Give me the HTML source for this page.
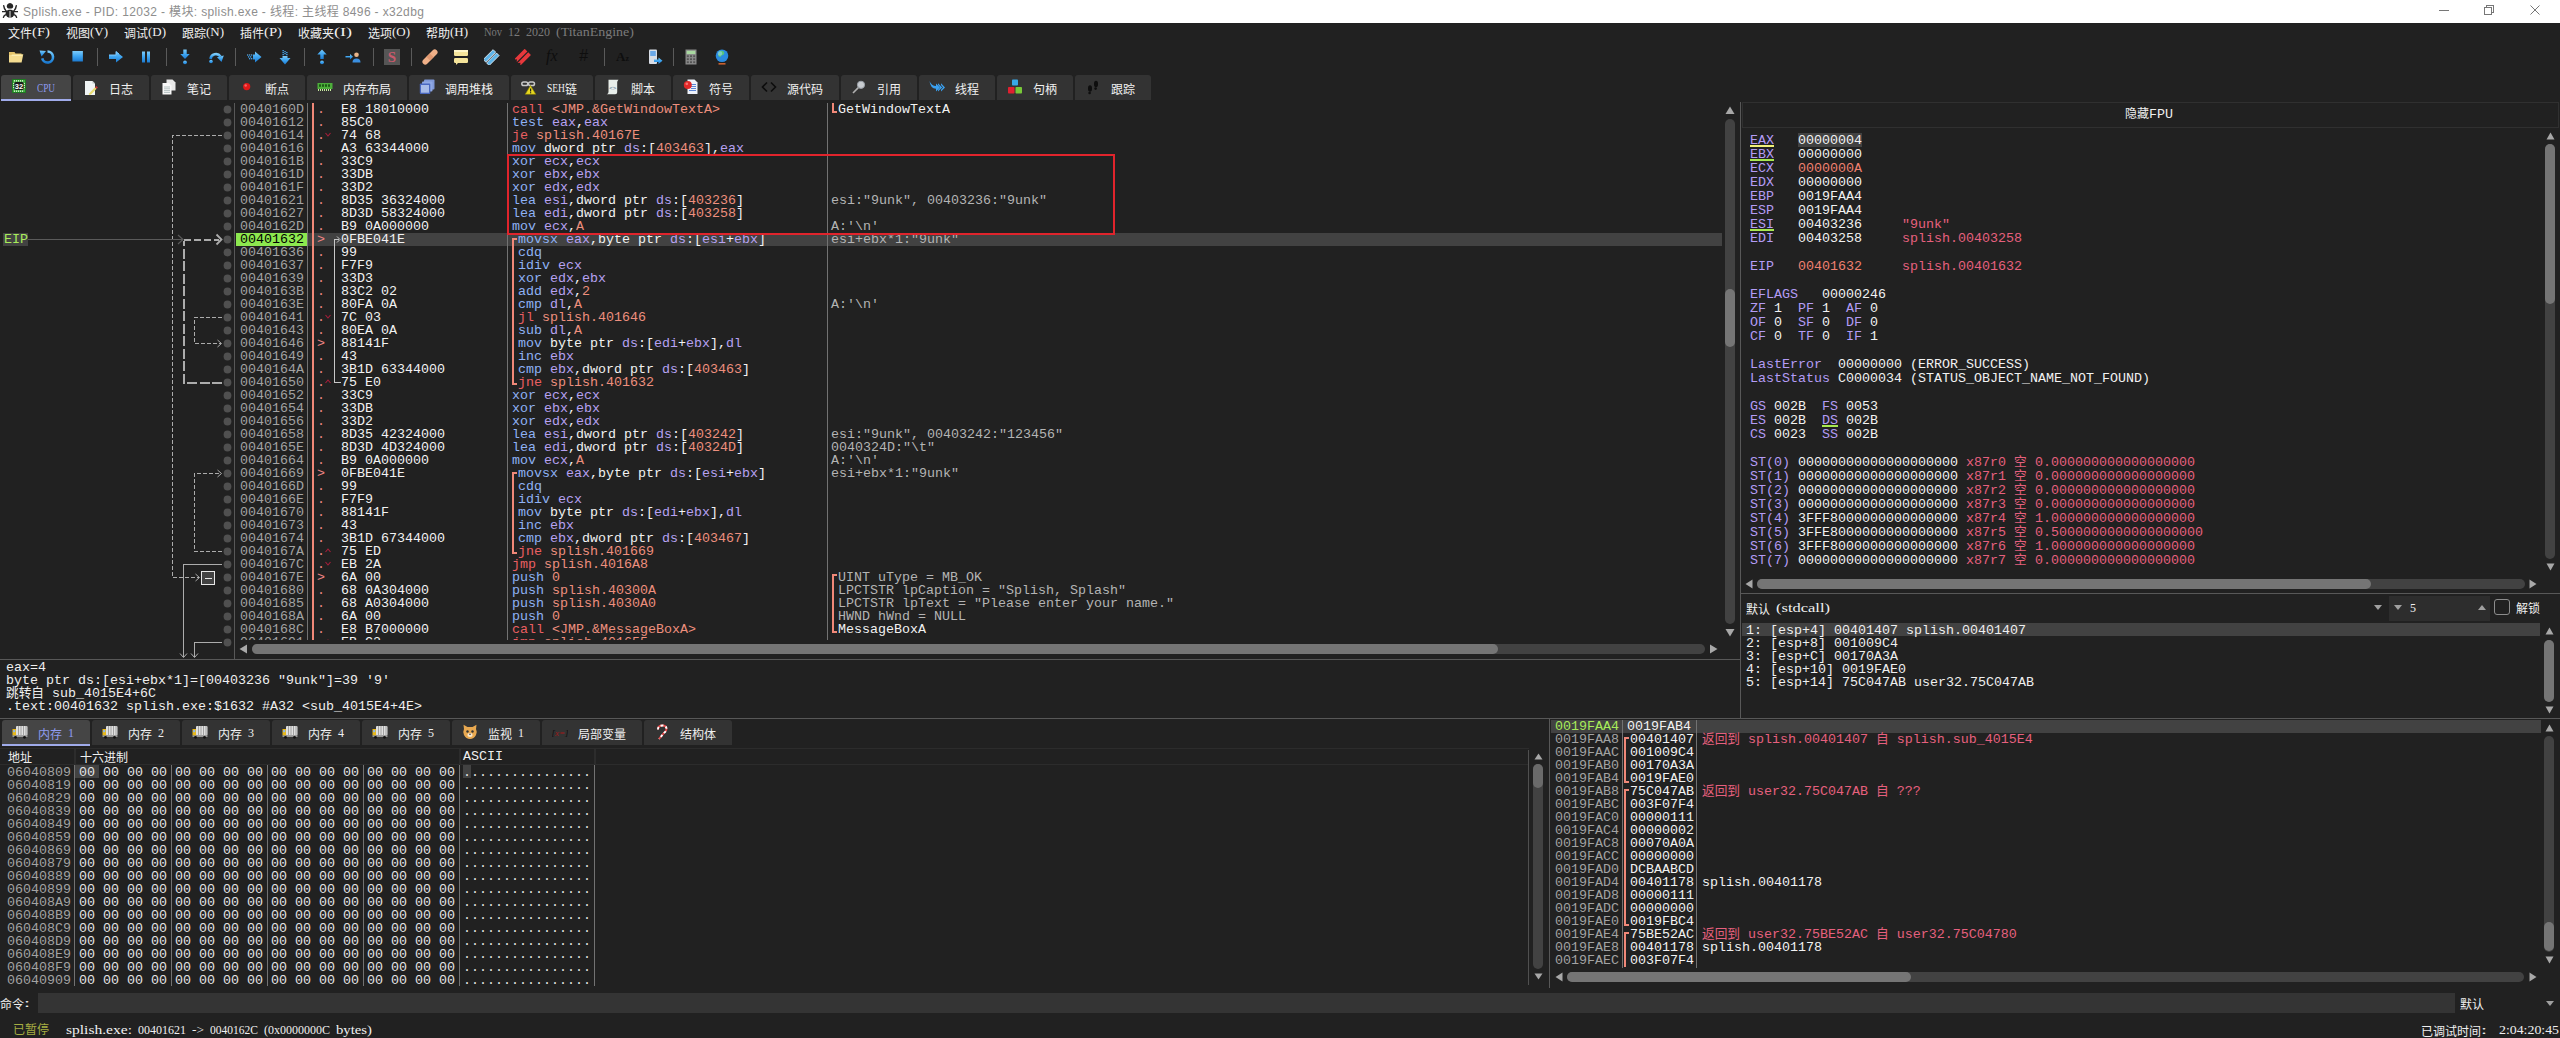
<!DOCTYPE html><html><head><meta charset="utf-8"><title>x32dbg</title><style>
*{box-sizing:border-box;margin:0;padding:0}
html,body{width:2560px;height:1038px;overflow:hidden;background:#212121}
body{position:relative;font-family:"Liberation Mono","Noto Sans CJK SC",monospace;font-size:13.333px;color:#e8e8e8}
div,span,svg{position:absolute}
span{position:static}
.m{white-space:pre;font-family:"Liberation Mono","Noto Sans CJK SC",monospace;font-size:13.333px;line-height:13px;height:13px;color:#efefef}
.m14{line-height:14px;height:14px}
.s{white-space:pre;font-family:"Liberation Serif","Noto Sans CJK SC",serif;font-size:12px;line-height:14px;color:#f0f0f0}
.a{color:#a3a3a3}.w{color:#f2f2f2}.k{color:#8fb2f5}.r{color:#b7a2f2}.n{color:#ee8f7e}.j{color:#ea5f62}.c{color:#b4b4b4}
.p{color:#e6607e}.rn{color:#b49cf5}.ch{color:#f08070}
.vl{width:1px;background:#727272}
.hl{height:1px;background:#4a4a4a}
.tab{background:#333;height:25px;top:75px}
.tab.sel{background:#454545;height:26px;border-bottom:2px solid #a0abea}
.tab .s{top:6px;left:36px}
.tab.sel .s{color:#8f9cf0}
.tab svg{left:10px;top:4px}
.trk{background:#424242;border-radius:5px}
.thm{background:#757575;border-radius:5px}
</style></head><body>
<div style="left:0px;top:0px;width:2560px;height:23px;background:#ffffff;"></div>
<div style="left:23px;top:4px;font-family:'Liberation Sans','Noto Sans CJK SC',sans-serif;font-size:12px;line-height:16px;color:#8e8e8e;white-space:pre;letter-spacing:0.36px">Splish.exe - PID: 12032 - 模块: splish.exe - 线程: 主线程 8496 - x32dbg</div>
<svg style="left:2px;top:3px" width="16" height="15" viewBox="0 0 16 15"><g fill="none" stroke="#262626" stroke-width="1.4" stroke-linecap="round"><path d="M4.2 8 Q2 6 1.7 2.6 M11.8 8 Q14 6 14.3 2.6 M0.5 8.6 H15.5 M4.6 11.4 Q1.8 12.2 1.4 14.3 M11.4 11.4 Q14.2 12.2 14.6 14.3"/></g><ellipse cx="8" cy="10.6" rx="4.4" ry="4" fill="#262626"/><path d="M8 0 q3.4 0.6 3.2 3.6 q-0.2 2.4 -3.2 2.5 q-3 -0.1 -3.2 -2.5 q-0.2 -3 3.2 -3.6z" fill="#262626"/><path d="M4 6.5 Q8 5.4 12 6.5" stroke="#fff" stroke-width="0.8" fill="none"/><rect x="7.3" y="8" width="1.4" height="6.4" fill="#b0b0b0"/></svg>
<svg style="left:2430px;top:0" width="130" height="23" viewBox="0 0 130 23"><g stroke="#777" stroke-width="1" fill="none" shape-rendering="crispEdges"><path d="M9 10.5 H19"/><path d="M54.5 7.5 h7 v7 h-7 z M56.5 7.5 v-2 h7 v7 h-2"/></g><path d="M100.5 5.5 L109.5 14.5 M109.5 5.5 L100.5 14.5" stroke="#777" stroke-width="1" fill="none"/></svg>
<div class="s" style="left:8px;top:25px;"><span style="position:relative;top:1.5px">文件</span><span style="display:inline-block;width:18px;height:14px;vertical-align:top"><span style="display:inline-block;transform:scaleX(1.227);transform-origin:0 50%">(F)</span></span></div>
<div class="s" style="left:66px;top:25px;"><span style="position:relative;top:1.5px">视图</span><span style="display:inline-block;width:18px;height:14px;vertical-align:top"><span style="display:inline-block;transform:scaleX(1.080);transform-origin:0 50%">(V)</span></span></div>
<div class="s" style="left:124px;top:25px;"><span style="position:relative;top:1.5px">调试</span><span style="display:inline-block;width:18px;height:14px;vertical-align:top"><span style="display:inline-block;transform:scaleX(1.080);transform-origin:0 50%">(D)</span></span></div>
<div class="s" style="left:182px;top:25px;"><span style="position:relative;top:1.5px">跟踪</span><span style="display:inline-block;width:18px;height:14px;vertical-align:top"><span style="display:inline-block;transform:scaleX(1.080);transform-origin:0 50%">(N)</span></span></div>
<div class="s" style="left:240px;top:25px;"><span style="position:relative;top:1.5px">插件</span><span style="display:inline-block;width:18px;height:14px;vertical-align:top"><span style="display:inline-block;transform:scaleX(1.227);transform-origin:0 50%">(P)</span></span></div>
<div class="s" style="left:298px;top:25px;"><span style="position:relative;top:1.5px">收藏夹</span><span style="display:inline-block;width:18px;height:14px;vertical-align:top"><span style="display:inline-block;transform:scaleX(1.501);transform-origin:0 50%">(I)</span></span></div>
<div class="s" style="left:368px;top:25px;"><span style="position:relative;top:1.5px">选项</span><span style="display:inline-block;width:18px;height:14px;vertical-align:top"><span style="display:inline-block;transform:scaleX(1.080);transform-origin:0 50%">(O)</span></span></div>
<div class="s" style="left:426px;top:25px;"><span style="position:relative;top:1.5px">帮助</span><span style="display:inline-block;width:18px;height:14px;vertical-align:top"><span style="display:inline-block;transform:scaleX(1.080);transform-origin:0 50%">(H)</span></span></div>
<div class="s" style="left:484px;top:25px;color:#7a7a7a;"><span style="display:inline-block;width:18px;height:14px;vertical-align:top"><span style="display:inline-block;transform:scaleX(0.871);transform-origin:0 50%">Nov</span></span><span style="display:inline-block;width:6px;height:14px;vertical-align:top"></span><span style="display:inline-block;width:12px;height:14px;vertical-align:top"><span style="display:inline-block;transform:scaleX(1.000);transform-origin:0 50%">12</span></span><span style="display:inline-block;width:6px;height:14px;vertical-align:top"></span><span style="display:inline-block;width:24px;height:14px;vertical-align:top"><span style="display:inline-block;transform:scaleX(1.000);transform-origin:0 50%">2020</span></span><span style="display:inline-block;width:6px;height:14px;vertical-align:top"></span><span style="display:inline-block;width:78px;height:14px;vertical-align:top"><span style="display:inline-block;transform:scaleX(1.166);transform-origin:0 50%">(TitanEngine)</span></span></div>
<svg width="0" height="0" style="left:0;top:0"><defs><linearGradient id="bg" x1="0" y1="0" x2="0" y2="1"><stop offset="0" stop-color="#7ccbf9"/><stop offset="0.5" stop-color="#3da4f0"/><stop offset="1" stop-color="#1c7ad0"/></linearGradient></defs></svg>
<div style="left:97px;top:48px;width:1px;height:18px;background:#5a5a5a;"></div>
<div style="left:166px;top:48px;width:1px;height:18px;background:#5a5a5a;"></div>
<div style="left:235px;top:48px;width:1px;height:18px;background:#5a5a5a;"></div>
<div style="left:304px;top:48px;width:1px;height:18px;background:#5a5a5a;"></div>
<div style="left:373px;top:48px;width:1px;height:18px;background:#5a5a5a;"></div>
<div style="left:411px;top:48px;width:1px;height:18px;background:#5a5a5a;"></div>
<div style="left:604px;top:48px;width:1px;height:18px;background:#5a5a5a;"></div>
<div style="left:673px;top:48px;width:1px;height:18px;background:#5a5a5a;"></div>
<svg style="left:8px;top:49px" width="16" height="16" viewBox="0 0 16 16"><path d="M1 3 h5.5 l1 1.5 h6 v3 H1z" fill="#e4c46c"/><path d="M1 13.6 V6 h2.5 l0.8 -0.8 H15.3 L13.6 13.6z" fill="#f4dc90"/><path d="M3.6 6.4 H14" stroke="#fbeeb8" stroke-width="1"/></svg>
<svg style="left:39px;top:49px" width="16" height="16" viewBox="0 0 16 16"><path d="M8.5 2.5 a5.5 5.5 0 1 1 -5.3 6.9" fill="none" stroke="url(#bg)" stroke-width="2.6"/><path d="M0.5 1.5 L7 2 L2.5 7.5z" fill="url(#bg)"/></svg>
<svg style="left:69px;top:49px" width="16" height="16" viewBox="0 0 16 16"><rect x="3.4" y="2" width="10.5" height="10.5" fill="url(#bg)"/></svg>
<svg style="left:108px;top:49px" width="16" height="16" viewBox="0 0 16 16"><path d="M1 6 H8 V2.5 L15 8 L8 13.5 V10 H1z" fill="url(#bg)"/><path d="M1 6 H8 V2.5 L11 5" fill="none" stroke="#7cc8ff" stroke-width="1"/></svg>
<svg style="left:138px;top:49px" width="16" height="16" viewBox="0 0 16 16"><rect x="4" y="2.5" width="3" height="11" fill="url(#bg)"/><rect x="9" y="2.5" width="3" height="11" fill="url(#bg)"/></svg>
<svg style="left:177px;top:49px" width="16" height="16" viewBox="0 0 16 16"><path d="M6.3 0.5 h3.4 v4.5 h3 L8 10 L3.3 5 h3z" fill="url(#bg)"/><circle cx="8" cy="13.3" r="1.9" fill="url(#bg)"/></svg>
<svg style="left:208px;top:49px" width="16" height="16" viewBox="0 0 16 16"><path d="M2.5 10 a5.5 5.5 0 0 1 10 -2.5" fill="none" stroke="url(#bg)" stroke-width="2.6"/><path d="M9 8.2 L15.8 6.5 L13.5 13z" fill="url(#bg)"/><circle cx="3" cy="12.5" r="1.8" fill="url(#bg)"/></svg>
<svg style="left:246px;top:49px" width="16" height="16" viewBox="0 0 16 16"><path d="M7 5.5 H9 V2.5 L15.5 8 L9 13.5 V10.5 H7z" fill="url(#bg)"/><g fill="url(#bg)"><rect x="1" y="5.5" width="1.3" height="1.3"/><rect x="3" y="5.5" width="1.3" height="1.3"/><rect x="5" y="5.5" width="1.3" height="1.3"/><rect x="2" y="7.4" width="1.3" height="1.3"/><rect x="4" y="7.4" width="1.3" height="1.3"/><rect x="3" y="9.2" width="1.3" height="1.3"/><rect x="5" y="9.2" width="1.3" height="1.3"/></g></svg>
<svg style="left:277px;top:49px" width="16" height="16" viewBox="0 0 16 16"><path d="M5.5 7 V9 H2.5 L8 15.5 L13.5 9 H10.5 V7z" fill="url(#bg)"/><g fill="url(#bg)"><rect x="5.5" y="1" width="1.3" height="1.3"/><rect x="5.5" y="3" width="1.3" height="1.3"/><rect x="5.5" y="5" width="1.3" height="1.3"/><rect x="7.4" y="2" width="1.3" height="1.3"/><rect x="7.4" y="4" width="1.3" height="1.3"/><rect x="9.2" y="3" width="1.3" height="1.3"/><rect x="9.2" y="5" width="1.3" height="1.3"/></g></svg>
<svg style="left:314px;top:49px" width="16" height="16" viewBox="0 0 16 16"><path d="M6.3 10 h3.4 V5.5 h3 L8 0.5 L3.3 5.5 h3z" fill="url(#bg)"/><circle cx="8" cy="13.3" r="1.9" fill="url(#bg)"/></svg>
<svg style="left:345px;top:49px" width="16" height="16" viewBox="0 0 16 16"><path d="M0.5 7 H5 V5 L8 7.8 L5 10.6 V8.6 H0.5z" fill="url(#bg)"/><circle cx="11.5" cy="5.8" r="2.3" fill="#e9b58a"/><path d="M7.5 13.5 q0 -4 4 -4 q4 0 4 4z" fill="#3b8fe0"/></svg>
<div style="left:384px;top:49px;width:16px;height:16px;background:#555;"></div>
<div style="left:384px;top:49px;width:16px;height:16px;font-family:'Liberation Serif',serif;font-weight:bold;font-size:15px;line-height:16px;text-align:center;color:#c85a6c">S</div>
<svg style="left:422px;top:49px" width="16" height="16" viewBox="0 0 16 16"><rect x="-1.5" y="5.2" width="19" height="5.6" rx="2.8" fill="#f0b088" transform="rotate(-45 8 8)"/><rect x="5.5" y="5.5" width="5" height="5" fill="#e09870" transform="rotate(-45 8 8)"/></svg>
<svg style="left:453px;top:49px" width="16" height="16" viewBox="0 0 16 16"><rect x="1" y="1" width="14" height="6" rx="1.2" fill="#f5e49a"/><rect x="1" y="9" width="14" height="5" rx="1.2" fill="#f5e49a"/><path d="M3 14 v2 l2 -2z" fill="#f5e49a"/><rect x="1" y="1" width="14" height="2" fill="#fff6c8"/></svg>
<svg style="left:484px;top:49px" width="16" height="16" viewBox="0 0 16 16"><g transform="rotate(-45 8 8)"><rect x="0" y="3.6" width="14" height="3.6" fill="#5db4e8" stroke="#e8f4ff" stroke-width=".8"/><rect x="0" y="8.4" width="14" height="3.6" fill="#5db4e8" stroke="#e8f4ff" stroke-width=".8"/></g></svg>
<svg style="left:515px;top:49px" width="16" height="16" viewBox="0 0 16 16"><g transform="rotate(-45 8 8)"><path d="M0 3.4 h15 v3.8 h-15 l2 -1.9z" fill="#e8383c"/><path d="M0 8.4 h15 v3.8 h-15 l2 -1.9z" fill="#e8383c"/></g></svg>
<div style="left:546px;top:47px;width:18px;height:18px;font-family:'Liberation Serif',serif;font-style:italic;font-size:16px;line-height:18px;color:#0e0e0e">fx</div>
<div style="left:579px;top:47px;width:16px;height:18px;font-family:'Liberation Sans',sans-serif;font-style:italic;font-size:16px;line-height:18px;color:#0e0e0e">#</div>
<div style="left:616px;top:49px;width:16px;height:16px;font-family:'Liberation Serif',serif;font-weight:bold;font-size:13px;line-height:16px;color:#0e0e0e">A<span style="font-size:8px">z</span></div>
<svg style="left:647px;top:49px" width="16" height="16" viewBox="0 0 16 16"><rect x="2" y="0.5" width="8" height="14.5" rx="1" fill="#d8dde6"/><rect x="3.2" y="2" width="5.6" height="5" fill="#6aa8e8"/><path d="M7 10.5 h4.5 v-2 l4 3.2 l-4 3.2 v-2 h-4.5z" fill="url(#bg)"/></svg>
<svg style="left:683px;top:49px" width="16" height="16" viewBox="0 0 16 16"><rect x="2.5" y="0.5" width="11" height="15" fill="#8a8a8a"/><rect x="3.7" y="1.8" width="8.6" height="3.2" fill="#a8d8a0"/><g fill="#555"><rect x="3.8" y="6.3" width="2" height="1.8"/><rect x="7" y="6.3" width="2" height="1.8"/><rect x="10.2" y="6.3" width="2" height="1.8"/><rect x="3.8" y="9.3" width="2" height="1.8"/><rect x="7" y="9.3" width="2" height="1.8"/><rect x="10.2" y="9.3" width="2" height="1.8"/><rect x="3.8" y="12.3" width="2" height="1.8"/><rect x="7" y="12.3" width="2" height="1.8"/><rect x="10.2" y="12.3" width="2" height="1.8"/></g></svg>
<svg style="left:714px;top:49px" width="16" height="16" viewBox="0 0 16 16"><circle cx="8" cy="6.8" r="6.3" fill="#2a8be0"/><path d="M5 2.5 q3 -1.5 5 0.5 q1 2 -1 3 q-2 0 -2.5 2 q-2 0 -2.5 -2z" fill="#58c878"/><circle cx="6" cy="4.5" r="2.2" fill="#9ad4ff" opacity=".55"/><rect x="4.5" y="14" width="7" height="1.6" fill="#c86030"/></svg>
<div class="tab sel" style="left:1px;top:75px;width:70px;border-radius:3px 3px 0 0"><svg width="16" height="16" viewBox="0 0 16 16"><g transform="translate(0,-1)"><rect x="1" y="1" width="14" height="14" fill="#1f7a22"/><rect x="2" y="2" width="12" height="12" fill="#43ab43"/><g fill="#c8ecc0"><rect x="3" y="2" width="1" height="1.6"/><rect x="5" y="2" width="1" height="1.6"/><rect x="7" y="2" width="1" height="1.6"/><rect x="9" y="2" width="1" height="1.6"/><rect x="11" y="2" width="1" height="1.6"/><rect x="3" y="12.4" width="1" height="1.6"/><rect x="5" y="12.4" width="1" height="1.6"/><rect x="7" y="12.4" width="1" height="1.6"/><rect x="9" y="12.4" width="1" height="1.6"/><rect x="11" y="12.4" width="1" height="1.6"/><rect x="2" y="5" width="1.4" height="1"/><rect x="2" y="7" width="1.4" height="1"/><rect x="2" y="9" width="1.4" height="1"/><rect x="12.6" y="5" width="1.4" height="1"/><rect x="12.6" y="7" width="1.4" height="1"/><rect x="12.6" y="9" width="1.4" height="1"/></g><rect x="3.4" y="4" width="9.2" height="8" rx="1.5" fill="#1a1a1a"/><text x="8" y="10.7" font-family="Liberation Sans" font-weight="bold" font-size="7.5" text-anchor="middle" fill="#fff">32</text></g></svg><div class="s"><span style="display:inline-block;width:18px;height:14px;vertical-align:top"><span style="display:inline-block;transform:scaleX(0.771);transform-origin:0 50%">CPU</span></span></div></div>
<div class="tab" style="left:73px;top:75px;width:76px;border-radius:3px 3px 0 0"><svg width="16" height="16" viewBox="0 0 16 16"><path d="M2 2 h7.5 l2.5 2.5 v11.5 h-10z" fill="#f0f4f4"/><path d="M9.5 2 v2.5 h2.5z" fill="#c0c8c8"/><path d="M6.3 14.2 L12 8.2 L13.6 9.8 L8 15.6 L5.8 16z" fill="#e8dc70"/><path d="M12 8.2 l1.2 -1.3 l1.7 1.6 l-1.2 1.3z" fill="#d03838"/></svg><div class="s"><span style="position:relative;top:1.5px">日志</span></div></div>
<div class="tab" style="left:151px;top:75px;width:76px;border-radius:3px 3px 0 0"><svg width="16" height="16" viewBox="0 0 16 16"><path d="M5.5 0.5 h6 l3 3 v8 h-9z" fill="#e8e8e8"/><path d="M1.5 4 h6.5 l2.5 2.5 v9 h-9z" fill="#f8f8f8"/><g stroke="#9aa" stroke-width=".7"><path d="M3 8 h6 M3 9.8 h6 M3 11.6 h6 M3 13.4 h6"/></g></svg><div class="s"><span style="position:relative;top:1.5px">笔记</span></div></div>
<div class="tab" style="left:229px;top:75px;width:76px;border-radius:3px 3px 0 0"><svg width="16" height="16" viewBox="0 0 16 16"><circle cx="7.7" cy="7.6" r="3.6" fill="#e01818"/><circle cx="6.7" cy="6.5" r="1.2" fill="#ff8080" opacity=".7"/></svg><div class="s"><span style="position:relative;top:1.5px">断点</span></div></div>
<div class="tab" style="left:307px;top:75px;width:100px;border-radius:3px 3px 0 0"><svg width="16" height="16" viewBox="0 0 16 16"><rect x="0.5" y="4" width="15" height="6" fill="#4cae3a"/><g fill="#1c5a14"><rect x="2" y="5.3" width="2" height="2.5"/><rect x="5" y="5.3" width="2" height="2.5"/><rect x="8" y="5.3" width="2" height="2.5"/><rect x="11" y="5.3" width="2" height="2.5"/></g><g fill="#c8e8a0"><rect x="1" y="10" width="1" height="2"/><rect x="3" y="10" width="1" height="2"/><rect x="5" y="10" width="1" height="2"/><rect x="7" y="10" width="1" height="2"/><rect x="9" y="10" width="1" height="2"/><rect x="11" y="10" width="1" height="2"/><rect x="13" y="10" width="1" height="2"/></g></svg><div class="s"><span style="position:relative;top:1.5px">内存布局</span></div></div>
<div class="tab" style="left:409px;top:75px;width:100px;border-radius:3px 3px 0 0"><svg width="16" height="16" viewBox="0 0 16 16"><rect x="5" y="0.5" width="10.5" height="10" rx="1" fill="#7f98d8"/><rect x="3" y="2.5" width="10.5" height="10" rx="1" fill="#8fa8e4"/><rect x="0.8" y="4.5" width="10.5" height="10.5" rx="1" fill="#4a68c0"/><rect x="2" y="6" width="8" height="7.7" fill="#a8bce8"/></svg><div class="s"><span style="position:relative;top:1.5px">调用堆栈</span></div></div>
<div class="tab" style="left:511px;top:75px;width:82px;border-radius:3px 3px 0 0"><svg width="16" height="16" viewBox="0 0 16 16"><g fill="none" stroke="#c8c8c8" stroke-width="1.5"><rect x="0.8" y="3" width="6" height="3.6" rx="1.8"/><rect x="7.5" y="3" width="6" height="3.6" rx="1.8"/></g><path d="M9.5 6.5 L14.8 15.3 H4.2z" fill="#e8d820" stroke="#8a8000" stroke-width=".6"/><rect x="9" y="9.5" width="1.2" height="3" fill="#222"/><rect x="9" y="13.2" width="1.2" height="1.1" fill="#222"/></svg><div class="s"><span style="display:inline-block;width:18px;height:14px;vertical-align:top"><span style="display:inline-block;transform:scaleX(0.794);transform-origin:0 50%">SEH</span></span><span style="position:relative;top:1.5px">链</span></div></div>
<div class="tab" style="left:595px;top:75px;width:76px;border-radius:3px 3px 0 0"><svg width="16" height="16" viewBox="0 0 16 16"><path d="M3.5 0.8 h10 q-1.3 1 -1.3 2.5 v10 q0 2 -2 2 h-8.5 q1.8 -0.5 1.8 -2.3z" fill="#e8eeea"/><text x="7.7" y="10.5" font-family="Liberation Sans" font-size="6" text-anchor="middle" fill="#4a6a8a">&lt;&gt;</text></svg><div class="s"><span style="position:relative;top:1.5px">脚本</span></div></div>
<div class="tab" style="left:673px;top:75px;width:76px;border-radius:3px 3px 0 0"><svg width="16" height="16" viewBox="0 0 16 16"><path d="M4.5 0.5 h7 l3 3 v11.5 h-10z" fill="#eef2fa"/><g stroke="#4a78d0" stroke-width=".9"><path d="M8 5.5 h5 M8 7.5 h5 M8 9.5 h5 M6 11.5 h7"/></g><circle cx="4.8" cy="6" r="4" fill="#e02828"/><circle cx="3.8" cy="4.8" r="1.4" fill="#ff9090" opacity=".7"/></svg><div class="s"><span style="position:relative;top:1.5px">符号</span></div></div>
<div class="tab" style="left:751px;top:75px;width:88px;border-radius:3px 3px 0 0"><svg width="16" height="16" viewBox="0 0 16 16"><path d="M6 3.5 L1.5 8 L6 12.5 M10 3.5 L14.5 8 L10 12.5" fill="none" stroke="#0c0c0c" stroke-width="1.6"/></svg><div class="s"><span style="position:relative;top:1.5px">源代码</span></div></div>
<div class="tab" style="left:841px;top:75px;width:76px;border-radius:3px 3px 0 0"><svg width="16" height="16" viewBox="0 0 16 16"><circle cx="10" cy="5.8" r="3.6" fill="#c8ccd0" stroke="#9aa0a8" stroke-width="1"/><path d="M7.3 8.6 L2 14" stroke="#b0b0b0" stroke-width="1.6"/></svg><div class="s"><span style="position:relative;top:1.5px">引用</span></div></div>
<div class="tab" style="left:919px;top:75px;width:76px;border-radius:3px 3px 0 0"><svg width="16" height="16" viewBox="0 0 16 16"><path d="M0.5 2 q2 5 6.5 5 v-2.6 l4 4 l-4 4 v-2.6 q-5.5 0 -6.5 -7.8z" fill="#3aa0f0"/><path d="M9 4.2 l4.2 4.2 l-4.2 4.2 l0 -1.8 l2.2 -2.4 l-2.2 -2.4z" fill="#3aa0f0"/><path d="M12 4.2 l4 4.2 l-4 4.2 l0 -1.8 l2 -2.4 l-2 -2.4z" fill="#3aa0f0"/></svg><div class="s"><span style="position:relative;top:1.5px">线程</span></div></div>
<div class="tab" style="left:997px;top:75px;width:76px;border-radius:3px 3px 0 0"><svg width="16" height="16" viewBox="0 0 16 16"><rect x="5" y="0.5" width="6" height="6" rx=".8" fill="#38a8e8"/><rect x="1" y="8" width="6.5" height="6.5" rx=".8" fill="#e02030"/><rect x="8.5" y="8" width="6.5" height="6.5" rx=".8" fill="#78c838"/></svg><div class="s"><span style="position:relative;top:1.5px">句柄</span></div></div>
<div class="tab" style="left:1075px;top:75px;width:76px;border-radius:3px 3px 0 0"><svg width="16" height="16" viewBox="0 0 16 16"><g fill="#0e0e0e"><ellipse cx="5" cy="9.5" rx="2" ry="3.2"/><ellipse cx="11" cy="5" rx="2" ry="3.2"/><circle cx="4.6" cy="14" r="1.3"/><circle cx="10.6" cy="9.6" r="1.3"/></g></svg><div class="s"><span style="position:relative;top:1.5px">跟踪</span></div></div>
<div style="left:235px;top:103px;width:1487px;height:537px;overflow:hidden">
<div style="left:72px;top:130px;width:1415px;height:13px;background:#424242"></div>
<div style="left:1px;top:130px;width:71px;height:13px;background:#8de84f"></div>
<div class="vl" style="left:72px;top:0;height:537px"></div>
<div class="vl" style="left:272px;top:0;height:537px"></div>
<div class="vl" style="left:592px;top:0;height:537px"></div>
<div style="left:77px;top:0;width:2px;height:537px;background:#f08878"></div>
<div style="left:99px;top:137px;width:1px;height:142px;background:#c8c8c8"></div>
<div style="left:99px;top:279px;width:7px;height:1px;background:#c8c8c8"></div>
<div style="left:99px;top:136px;width:5px;height:1px;background:#c8c8c8"></div>
<svg style="left:101px;top:133px" width="5" height="7"><path d="M1 0.5 L4 3.5 L1 6.5" fill="none" stroke="#c8c8c8" stroke-width="1"/></svg>
<div style="left:277px;top:135px;width:2px;height:147px;background:#f08878"></div>
<div style="left:277px;top:135px;width:5px;height:2px;background:#f08878"></div>
<div style="left:277px;top:280px;width:5px;height:2px;background:#f08878"></div>
<div style="left:277px;top:369px;width:2px;height:82px;background:#f08878"></div>
<div style="left:277px;top:369px;width:5px;height:2px;background:#f08878"></div>
<div style="left:277px;top:449px;width:5px;height:2px;background:#f08878"></div>
<div style="left:597px;top:0px;width:2px;height:10px;background:#f08878"></div>
<div style="left:597px;top:8px;width:5px;height:2px;background:#f08878"></div>
<div style="left:597px;top:471px;width:2px;height:59px;background:#f08878"></div>
<div style="left:597px;top:471px;width:5px;height:2px;background:#f08878"></div>
<div style="left:597px;top:528px;width:5px;height:2px;background:#f08878"></div>
<div class="m a" style="left:5px;top:0px">0040160D</div>
<div class="m" style="left:82px;top:0px;color:#ee8484">.</div>
<div class="m w" style="left:106px;top:0px">E8 18010000</div>
<div class="m" style="left:277px;top:0px"><span class="j">call</span> <span class="n">&lt;JMP.&amp;GetWindowTextA&gt;</span></div>
<div class="m w" style="left:603px;top:0px">GetWindowTextA</div>
<div class="m a" style="left:5px;top:13px">00401612</div>
<div class="m" style="left:82px;top:13px;color:#ee8484">.</div>
<div class="m w" style="left:106px;top:13px">85C0</div>
<div class="m" style="left:277px;top:13px"><span class="k">test</span> <span class="r">eax</span><span class="w">,</span><span class="r">eax</span></div>
<div class="m a" style="left:5px;top:26px">00401614</div>
<div class="m" style="left:82px;top:26px;color:#ee8484">.</div>
<svg style="left:90px;top:29px" width="6" height="5"><path d="M0.5 1 L3 4 L5.5 1" fill="none" stroke="#a81e3a" stroke-width="1.1"/></svg>
<div class="m w" style="left:106px;top:26px">74 68</div>
<div class="m" style="left:277px;top:26px"><span class="j">je</span> <span class="n">splish.40167E</span></div>
<div class="m a" style="left:5px;top:39px">00401616</div>
<div class="m" style="left:82px;top:39px;color:#ee8484">.</div>
<div class="m w" style="left:106px;top:39px">A3 63344000</div>
<div class="m" style="left:277px;top:39px"><span class="k">mov</span> <span class="w">dword ptr</span><span class="w"> </span><span class="r">ds</span><span class="w">:</span><span class="w">[</span><span class="n">403463</span><span class="w">]</span><span class="w">,</span><span class="r">eax</span></div>
<div class="m a" style="left:5px;top:52px">0040161B</div>
<div class="m" style="left:82px;top:52px;color:#ee8484">.</div>
<div class="m w" style="left:106px;top:52px">33C9</div>
<div class="m" style="left:277px;top:52px"><span class="k">xor</span> <span class="r">ecx</span><span class="w">,</span><span class="r">ecx</span></div>
<div class="m a" style="left:5px;top:65px">0040161D</div>
<div class="m" style="left:82px;top:65px;color:#ee8484">.</div>
<div class="m w" style="left:106px;top:65px">33DB</div>
<div class="m" style="left:277px;top:65px"><span class="k">xor</span> <span class="r">ebx</span><span class="w">,</span><span class="r">ebx</span></div>
<div class="m a" style="left:5px;top:78px">0040161F</div>
<div class="m" style="left:82px;top:78px;color:#ee8484">.</div>
<div class="m w" style="left:106px;top:78px">33D2</div>
<div class="m" style="left:277px;top:78px"><span class="k">xor</span> <span class="r">edx</span><span class="w">,</span><span class="r">edx</span></div>
<div class="m a" style="left:5px;top:91px">00401621</div>
<div class="m" style="left:82px;top:91px;color:#ee8484">.</div>
<div class="m w" style="left:106px;top:91px">8D35 36324000</div>
<div class="m" style="left:277px;top:91px"><span class="k">lea</span> <span class="r">esi</span><span class="w">,</span><span class="w">dword ptr</span><span class="w"> </span><span class="r">ds</span><span class="w">:</span><span class="w">[</span><span class="n">403236</span><span class="w">]</span></div>
<div class="m c" style="left:596px;top:91px">esi:"9unk", 00403236:"9unk"</div>
<div class="m a" style="left:5px;top:104px">00401627</div>
<div class="m" style="left:82px;top:104px;color:#ee8484">.</div>
<div class="m w" style="left:106px;top:104px">8D3D 58324000</div>
<div class="m" style="left:277px;top:104px"><span class="k">lea</span> <span class="r">edi</span><span class="w">,</span><span class="w">dword ptr</span><span class="w"> </span><span class="r">ds</span><span class="w">:</span><span class="w">[</span><span class="n">403258</span><span class="w">]</span></div>
<div class="m a" style="left:5px;top:117px">0040162D</div>
<div class="m" style="left:82px;top:117px;color:#ee8484">.</div>
<div class="m w" style="left:106px;top:117px">B9 0A000000</div>
<div class="m" style="left:277px;top:117px"><span class="k">mov</span> <span class="r">ecx</span><span class="w">,</span><span class="n">A</span></div>
<div class="m c" style="left:596px;top:117px">A:'\n'</div>
<div class="m" style="left:5px;top:130px;color:#000">00401632</div>
<div class="m" style="left:82px;top:130px;color:#ee8484">&gt;</div>
<div class="m w" style="left:106px;top:130px">0FBE041E</div>
<div class="m" style="left:283px;top:130px"><span class="k">movsx</span> <span class="r">eax</span><span class="w">,</span><span class="w">byte ptr</span><span class="w"> </span><span class="r">ds</span><span class="w">:</span><span class="w">[</span><span class="r">esi</span><span class="w">+</span><span class="r">ebx</span><span class="w">]</span></div>
<div class="m c" style="left:596px;top:130px">esi+ebx*1:"9unk"</div>
<div class="m a" style="left:5px;top:143px">00401636</div>
<div class="m" style="left:82px;top:143px;color:#ee8484">.</div>
<div class="m w" style="left:106px;top:143px">99</div>
<div class="m" style="left:283px;top:143px"><span class="k">cdq</span></div>
<div class="m a" style="left:5px;top:156px">00401637</div>
<div class="m" style="left:82px;top:156px;color:#ee8484">.</div>
<div class="m w" style="left:106px;top:156px">F7F9</div>
<div class="m" style="left:283px;top:156px"><span class="k">idiv</span> <span class="r">ecx</span></div>
<div class="m a" style="left:5px;top:169px">00401639</div>
<div class="m" style="left:82px;top:169px;color:#ee8484">.</div>
<div class="m w" style="left:106px;top:169px">33D3</div>
<div class="m" style="left:283px;top:169px"><span class="k">xor</span> <span class="r">edx</span><span class="w">,</span><span class="r">ebx</span></div>
<div class="m a" style="left:5px;top:182px">0040163B</div>
<div class="m" style="left:82px;top:182px;color:#ee8484">.</div>
<div class="m w" style="left:106px;top:182px">83C2 02</div>
<div class="m" style="left:283px;top:182px"><span class="k">add</span> <span class="r">edx</span><span class="w">,</span><span class="n">2</span></div>
<div class="m a" style="left:5px;top:195px">0040163E</div>
<div class="m" style="left:82px;top:195px;color:#ee8484">.</div>
<div class="m w" style="left:106px;top:195px">80FA 0A</div>
<div class="m" style="left:283px;top:195px"><span class="k">cmp</span> <span class="r">dl</span><span class="w">,</span><span class="n">A</span></div>
<div class="m c" style="left:596px;top:195px">A:'\n'</div>
<div class="m a" style="left:5px;top:208px">00401641</div>
<div class="m" style="left:82px;top:208px;color:#ee8484">.</div>
<svg style="left:90px;top:211px" width="6" height="5"><path d="M0.5 1 L3 4 L5.5 1" fill="none" stroke="#a81e3a" stroke-width="1.1"/></svg>
<div class="m w" style="left:106px;top:208px">7C 03</div>
<div class="m" style="left:283px;top:208px"><span class="j">jl</span> <span class="n">splish.401646</span></div>
<div class="m a" style="left:5px;top:221px">00401643</div>
<div class="m" style="left:82px;top:221px;color:#ee8484">.</div>
<div class="m w" style="left:106px;top:221px">80EA 0A</div>
<div class="m" style="left:283px;top:221px"><span class="k">sub</span> <span class="r">dl</span><span class="w">,</span><span class="n">A</span></div>
<div class="m a" style="left:5px;top:234px">00401646</div>
<div class="m" style="left:82px;top:234px;color:#ee8484">&gt;</div>
<div class="m w" style="left:106px;top:234px">88141F</div>
<div class="m" style="left:283px;top:234px"><span class="k">mov</span> <span class="w">byte ptr</span><span class="w"> </span><span class="r">ds</span><span class="w">:</span><span class="w">[</span><span class="r">edi</span><span class="w">+</span><span class="r">ebx</span><span class="w">]</span><span class="w">,</span><span class="r">dl</span></div>
<div class="m a" style="left:5px;top:247px">00401649</div>
<div class="m" style="left:82px;top:247px;color:#ee8484">.</div>
<div class="m w" style="left:106px;top:247px">43</div>
<div class="m" style="left:283px;top:247px"><span class="k">inc</span> <span class="r">ebx</span></div>
<div class="m a" style="left:5px;top:260px">0040164A</div>
<div class="m" style="left:82px;top:260px;color:#ee8484">.</div>
<div class="m w" style="left:106px;top:260px">3B1D 63344000</div>
<div class="m" style="left:283px;top:260px"><span class="k">cmp</span> <span class="r">ebx</span><span class="w">,</span><span class="w">dword ptr</span><span class="w"> </span><span class="r">ds</span><span class="w">:</span><span class="w">[</span><span class="n">403463</span><span class="w">]</span></div>
<div class="m a" style="left:5px;top:273px">00401650</div>
<div class="m" style="left:82px;top:273px;color:#ee8484">.</div>
<svg style="left:90px;top:276px" width="6" height="5"><path d="M0.5 4 L3 1 L5.5 4" fill="none" stroke="#a81e3a" stroke-width="1.1"/></svg>
<div class="m w" style="left:106px;top:273px">75 E0</div>
<div class="m" style="left:283px;top:273px"><span class="j">jne</span> <span class="n">splish.401632</span></div>
<div class="m a" style="left:5px;top:286px">00401652</div>
<div class="m" style="left:82px;top:286px;color:#ee8484">.</div>
<div class="m w" style="left:106px;top:286px">33C9</div>
<div class="m" style="left:277px;top:286px"><span class="k">xor</span> <span class="r">ecx</span><span class="w">,</span><span class="r">ecx</span></div>
<div class="m a" style="left:5px;top:299px">00401654</div>
<div class="m" style="left:82px;top:299px;color:#ee8484">.</div>
<div class="m w" style="left:106px;top:299px">33DB</div>
<div class="m" style="left:277px;top:299px"><span class="k">xor</span> <span class="r">ebx</span><span class="w">,</span><span class="r">ebx</span></div>
<div class="m a" style="left:5px;top:312px">00401656</div>
<div class="m" style="left:82px;top:312px;color:#ee8484">.</div>
<div class="m w" style="left:106px;top:312px">33D2</div>
<div class="m" style="left:277px;top:312px"><span class="k">xor</span> <span class="r">edx</span><span class="w">,</span><span class="r">edx</span></div>
<div class="m a" style="left:5px;top:325px">00401658</div>
<div class="m" style="left:82px;top:325px;color:#ee8484">.</div>
<div class="m w" style="left:106px;top:325px">8D35 42324000</div>
<div class="m" style="left:277px;top:325px"><span class="k">lea</span> <span class="r">esi</span><span class="w">,</span><span class="w">dword ptr</span><span class="w"> </span><span class="r">ds</span><span class="w">:</span><span class="w">[</span><span class="n">403242</span><span class="w">]</span></div>
<div class="m c" style="left:596px;top:325px">esi:"9unk", 00403242:"123456"</div>
<div class="m a" style="left:5px;top:338px">0040165E</div>
<div class="m" style="left:82px;top:338px;color:#ee8484">.</div>
<div class="m w" style="left:106px;top:338px">8D3D 4D324000</div>
<div class="m" style="left:277px;top:338px"><span class="k">lea</span> <span class="r">edi</span><span class="w">,</span><span class="w">dword ptr</span><span class="w"> </span><span class="r">ds</span><span class="w">:</span><span class="w">[</span><span class="n">40324D</span><span class="w">]</span></div>
<div class="m c" style="left:596px;top:338px">0040324D:"\t"</div>
<div class="m a" style="left:5px;top:351px">00401664</div>
<div class="m" style="left:82px;top:351px;color:#ee8484">.</div>
<div class="m w" style="left:106px;top:351px">B9 0A000000</div>
<div class="m" style="left:277px;top:351px"><span class="k">mov</span> <span class="r">ecx</span><span class="w">,</span><span class="n">A</span></div>
<div class="m c" style="left:596px;top:351px">A:'\n'</div>
<div class="m a" style="left:5px;top:364px">00401669</div>
<div class="m" style="left:82px;top:364px;color:#ee8484">&gt;</div>
<div class="m w" style="left:106px;top:364px">0FBE041E</div>
<div class="m" style="left:283px;top:364px"><span class="k">movsx</span> <span class="r">eax</span><span class="w">,</span><span class="w">byte ptr</span><span class="w"> </span><span class="r">ds</span><span class="w">:</span><span class="w">[</span><span class="r">esi</span><span class="w">+</span><span class="r">ebx</span><span class="w">]</span></div>
<div class="m c" style="left:596px;top:364px">esi+ebx*1:"9unk"</div>
<div class="m a" style="left:5px;top:377px">0040166D</div>
<div class="m" style="left:82px;top:377px;color:#ee8484">.</div>
<div class="m w" style="left:106px;top:377px">99</div>
<div class="m" style="left:283px;top:377px"><span class="k">cdq</span></div>
<div class="m a" style="left:5px;top:390px">0040166E</div>
<div class="m" style="left:82px;top:390px;color:#ee8484">.</div>
<div class="m w" style="left:106px;top:390px">F7F9</div>
<div class="m" style="left:283px;top:390px"><span class="k">idiv</span> <span class="r">ecx</span></div>
<div class="m a" style="left:5px;top:403px">00401670</div>
<div class="m" style="left:82px;top:403px;color:#ee8484">.</div>
<div class="m w" style="left:106px;top:403px">88141F</div>
<div class="m" style="left:283px;top:403px"><span class="k">mov</span> <span class="w">byte ptr</span><span class="w"> </span><span class="r">ds</span><span class="w">:</span><span class="w">[</span><span class="r">edi</span><span class="w">+</span><span class="r">ebx</span><span class="w">]</span><span class="w">,</span><span class="r">dl</span></div>
<div class="m a" style="left:5px;top:416px">00401673</div>
<div class="m" style="left:82px;top:416px;color:#ee8484">.</div>
<div class="m w" style="left:106px;top:416px">43</div>
<div class="m" style="left:283px;top:416px"><span class="k">inc</span> <span class="r">ebx</span></div>
<div class="m a" style="left:5px;top:429px">00401674</div>
<div class="m" style="left:82px;top:429px;color:#ee8484">.</div>
<div class="m w" style="left:106px;top:429px">3B1D 67344000</div>
<div class="m" style="left:283px;top:429px"><span class="k">cmp</span> <span class="r">ebx</span><span class="w">,</span><span class="w">dword ptr</span><span class="w"> </span><span class="r">ds</span><span class="w">:</span><span class="w">[</span><span class="n">403467</span><span class="w">]</span></div>
<div class="m a" style="left:5px;top:442px">0040167A</div>
<div class="m" style="left:82px;top:442px;color:#ee8484">.</div>
<svg style="left:90px;top:445px" width="6" height="5"><path d="M0.5 4 L3 1 L5.5 4" fill="none" stroke="#a81e3a" stroke-width="1.1"/></svg>
<div class="m w" style="left:106px;top:442px">75 ED</div>
<div class="m" style="left:283px;top:442px"><span class="j">jne</span> <span class="n">splish.401669</span></div>
<div class="m a" style="left:5px;top:455px">0040167C</div>
<div class="m" style="left:82px;top:455px;color:#ee8484">.</div>
<svg style="left:90px;top:458px" width="6" height="5"><path d="M0.5 1 L3 4 L5.5 1" fill="none" stroke="#a81e3a" stroke-width="1.1"/></svg>
<div class="m w" style="left:106px;top:455px">EB 2A</div>
<div class="m" style="left:277px;top:455px"><span class="j">jmp</span> <span class="n">splish.4016A8</span></div>
<div class="m a" style="left:5px;top:468px">0040167E</div>
<div class="m" style="left:82px;top:468px;color:#ee8484">&gt;</div>
<div class="m w" style="left:106px;top:468px">6A 00</div>
<div class="m" style="left:277px;top:468px"><span class="k">push</span> <span class="n">0</span></div>
<div class="m c" style="left:603px;top:468px">UINT uType = MB_OK</div>
<div class="m a" style="left:5px;top:481px">00401680</div>
<div class="m" style="left:82px;top:481px;color:#ee8484">.</div>
<div class="m w" style="left:106px;top:481px">68 0A304000</div>
<div class="m" style="left:277px;top:481px"><span class="k">push</span> <span class="n">splish.40300A</span></div>
<div class="m c" style="left:603px;top:481px">LPCTSTR lpCaption = "Splish, Splash"</div>
<div class="m a" style="left:5px;top:494px">00401685</div>
<div class="m" style="left:82px;top:494px;color:#ee8484">.</div>
<div class="m w" style="left:106px;top:494px">68 A0304000</div>
<div class="m" style="left:277px;top:494px"><span class="k">push</span> <span class="n">splish.4030A0</span></div>
<div class="m c" style="left:603px;top:494px">LPCTSTR lpText = "Please enter your name."</div>
<div class="m a" style="left:5px;top:507px">0040168A</div>
<div class="m" style="left:82px;top:507px;color:#ee8484">.</div>
<div class="m w" style="left:106px;top:507px">6A 00</div>
<div class="m" style="left:277px;top:507px"><span class="k">push</span> <span class="n">0</span></div>
<div class="m c" style="left:603px;top:507px">HWND hWnd = NULL</div>
<div class="m a" style="left:5px;top:520px">0040168C</div>
<div class="m" style="left:82px;top:520px;color:#ee8484">.</div>
<div class="m w" style="left:106px;top:520px">E8 B7000000</div>
<div class="m" style="left:277px;top:520px"><span class="j">call</span> <span class="n">&lt;JMP.&amp;MessageBoxA&gt;</span></div>
<div class="m w" style="left:603px;top:520px">MessageBoxA</div>
<div class="m a" style="left:5px;top:533px">00401691</div>
<div class="m" style="left:82px;top:533px;color:#ee8484">.</div>
<svg style="left:90px;top:536px" width="6" height="5"><path d="M0.5 4 L3 1 L5.5 4" fill="none" stroke="#a81e3a" stroke-width="1.1"/></svg>
<div class="m w" style="left:106px;top:533px">EB C2</div>
<div class="m" style="left:277px;top:533px"><span class="j">jmp</span> <span class="n">splish.401655</span></div>
</div>
<div style="left:509px;top:233px;width:604px;height:2px;background:#212121;"></div>
<div style="left:827px;top:233px;width:1px;height:2px;background:#727272;"></div>
<div style="left:507px;top:154px;width:608px;height:81px;border:2px solid #e0242c;background:transparent"></div>
<svg style="left:1725px;top:106px" width="10" height="9"><path d="M5 0.5 L9.5 8 H0.5z" fill="#a8a8a8"/></svg>
<div class="trk" style="left:1725px;top:119px;width:10px;height:505px"></div>
<div class="thm" style="left:1725px;top:289px;width:10px;height:58px"></div>
<svg style="left:1725px;top:628px" width="10" height="9"><path d="M5 8.5 L9.5 1 H0.5z" fill="#a8a8a8"/></svg>
<svg style="left:239px;top:644px" width="9" height="10"><path d="M0.5 5 L8 0.5 V9.5z" fill="#a8a8a8"/></svg>
<div class="trk" style="left:252px;top:644px;width:1453px;height:10px"></div>
<div class="thm" style="left:252px;top:644px;width:1246px;height:10px"></div>
<svg style="left:1709px;top:644px" width="9" height="10"><path d="M8.5 5 L1 0.5 V9.5z" fill="#a8a8a8"/></svg>
<svg style="left:0;top:103px" width="235" height="557" viewBox="0 0 235 557"><circle cx="227.5" cy="6.5" r="3.9" fill="#505050"/><circle cx="227.5" cy="19.5" r="3.9" fill="#505050"/><circle cx="227.5" cy="32.5" r="3.9" fill="#505050"/><circle cx="227.5" cy="45.5" r="3.9" fill="#505050"/><circle cx="227.5" cy="58.5" r="3.9" fill="#505050"/><circle cx="227.5" cy="71.5" r="3.9" fill="#505050"/><circle cx="227.5" cy="84.5" r="3.9" fill="#505050"/><circle cx="227.5" cy="97.5" r="3.9" fill="#505050"/><circle cx="227.5" cy="110.5" r="3.9" fill="#505050"/><circle cx="227.5" cy="123.5" r="3.9" fill="#505050"/><circle cx="227.5" cy="136.5" r="3.9" fill="#505050"/><circle cx="227.5" cy="149.5" r="3.9" fill="#505050"/><circle cx="227.5" cy="162.5" r="3.9" fill="#505050"/><circle cx="227.5" cy="175.5" r="3.9" fill="#505050"/><circle cx="227.5" cy="188.5" r="3.9" fill="#505050"/><circle cx="227.5" cy="201.5" r="3.9" fill="#505050"/><circle cx="227.5" cy="214.5" r="3.9" fill="#505050"/><circle cx="227.5" cy="227.5" r="3.9" fill="#505050"/><circle cx="227.5" cy="240.5" r="3.9" fill="#505050"/><circle cx="227.5" cy="253.5" r="3.9" fill="#505050"/><circle cx="227.5" cy="266.5" r="3.9" fill="#505050"/><circle cx="227.5" cy="279.5" r="3.9" fill="#505050"/><circle cx="227.5" cy="292.5" r="3.9" fill="#505050"/><circle cx="227.5" cy="305.5" r="3.9" fill="#505050"/><circle cx="227.5" cy="318.5" r="3.9" fill="#505050"/><circle cx="227.5" cy="331.5" r="3.9" fill="#505050"/><circle cx="227.5" cy="344.5" r="3.9" fill="#505050"/><circle cx="227.5" cy="357.5" r="3.9" fill="#505050"/><circle cx="227.5" cy="370.5" r="3.9" fill="#505050"/><circle cx="227.5" cy="383.5" r="3.9" fill="#505050"/><circle cx="227.5" cy="396.5" r="3.9" fill="#505050"/><circle cx="227.5" cy="409.5" r="3.9" fill="#505050"/><circle cx="227.5" cy="422.5" r="3.9" fill="#505050"/><circle cx="227.5" cy="435.5" r="3.9" fill="#505050"/><circle cx="227.5" cy="448.5" r="3.9" fill="#505050"/><circle cx="227.5" cy="461.5" r="3.9" fill="#505050"/><circle cx="227.5" cy="474.5" r="3.9" fill="#505050"/><circle cx="227.5" cy="487.5" r="3.9" fill="#505050"/><circle cx="227.5" cy="500.5" r="3.9" fill="#505050"/><circle cx="227.5" cy="513.5" r="3.9" fill="#505050"/><circle cx="227.5" cy="526.5" r="3.9" fill="#505050"/><circle cx="227.5" cy="539.5" r="3.9" fill="#505050"/><path d="M222 32.5 H172.5 V474.5 H199" fill="none" stroke="#acacac" stroke-width="1" stroke-dasharray="4 2" shape-rendering="crispEdges"/><path d="M195.5 471.0 L199.5 474.5 L195.5 478.0" fill="none" stroke="#acacac" stroke-width="1"/><rect x="201.5" y="468.5" width="13" height="13" fill="#424242" stroke="#e8e8e8" stroke-width="1"/><path d="M204.5 475.0 H211.5" stroke="#e8e8e8" stroke-width="1" shape-rendering="crispEdges"/><path d="M28 136.5 H183" stroke="#5a5a5a" stroke-width="1" shape-rendering="crispEdges"/><path d="M178 132.0 L183 136.5 L178 141.0" fill="none" stroke="#5a5a5a" stroke-width="1.2"/><path d="M222 279.5 H183.5 V137.5" fill="none" stroke="#acacac" stroke-width="2" stroke-dasharray="10 2.5" shape-rendering="crispEdges"/><path d="M184 136.5 H219" fill="none" stroke="#acacac" stroke-width="2" stroke-dasharray="7 3" shape-rendering="crispEdges"/><path d="M216.5 131.5 L221.5 136.5 L216.5 141.5" fill="none" stroke="#acacac" stroke-width="1.8"/><path d="M222 214.5 H194.5 V240.5 H221" fill="none" stroke="#acacac" stroke-width="1" stroke-dasharray="4 2" shape-rendering="crispEdges"/><path d="M217.5 237.0 L221.5 240.5 L217.5 244.0" fill="none" stroke="#acacac" stroke-width="1"/><path d="M222 448.5 H194.5 V370.5 H221" fill="none" stroke="#acacac" stroke-width="1" stroke-dasharray="4 2" shape-rendering="crispEdges"/><path d="M217.5 367.0 L221.5 370.5 L217.5 374.0" fill="none" stroke="#acacac" stroke-width="1"/><path d="M222 461.5 H183.5 V554" fill="none" stroke="#acacac" stroke-width="1" shape-rendering="crispEdges"/><path d="M180 550.5 L183.5 554.5 L187 550.5" fill="none" stroke="#acacac" stroke-width="1"/><path d="M222 539.5 H194.5 V554" fill="none" stroke="#acacac" stroke-width="1" shape-rendering="crispEdges"/><path d="M191 550.5 L194.5 554.5 L198 550.5" fill="none" stroke="#acacac" stroke-width="1"/></svg>
<div style="left:3px;top:233px;width:25px;height:13px;background:#424242;"></div>
<div class="m " style="left:4px;top:233px;color:#a8ec5a">EIP</div>
<div style="left:234px;top:103px;width:1px;height:557px;background:#585858;"></div>
<div style="left:0px;top:659px;width:1741px;height:1px;background:#585858;"></div>
<div style="left:1740px;top:102px;width:1px;height:616px;background:#585858;"></div>
<div class="m " style="left:6px;top:661px;">eax=4</div>
<div class="m " style="left:6px;top:674px;">byte ptr ds:[esi+ebx*1]=[00403236 "9unk"]=39 '9'</div>
<div class="m " style="left:6px;top:687px;"><span style="font-size:12.7px">跳转自</span> sub_4015E4+6C</div>
<div class="m " style="left:6px;top:700px;">.text:00401632 splish.exe:$1632 #A32 &lt;sub_4015E4+4E&gt;</div>
<div style="left:0px;top:718px;width:2560px;height:1px;background:#585858;"></div>
<div style="left:1742px;top:102px;width:817px;height:26px;border:1px solid #303030"></div>
<div class="m " style="left:2125px;top:108px;"><span style="font-size:12px">隐藏</span>FPU</div>
<div style="left:1798px;top:133px;width:64px;height:14px;background:#424242;"></div>
<div class="m m14 rn" style="left:1750px;top:134px">EAX</div>
<div class="m m14 w" style="left:1798px;top:134px">00000004</div>
<div class="m m14 rn" style="left:1750px;top:148px">EBX</div>
<div class="m m14 w" style="left:1798px;top:148px">00000000</div>
<div class="m m14 rn" style="left:1750px;top:162px">ECX</div>
<div class="m m14 ch" style="left:1798px;top:162px">0000000A</div>
<div class="m m14 rn" style="left:1750px;top:176px">EDX</div>
<div class="m m14 w" style="left:1798px;top:176px">00000000</div>
<div class="m m14 rn" style="left:1750px;top:190px">EBP</div>
<div class="m m14 w" style="left:1798px;top:190px">0019FAA4</div>
<div class="m m14 rn" style="left:1750px;top:204px">ESP</div>
<div class="m m14 w" style="left:1798px;top:204px">0019FAA4</div>
<div class="m m14 rn" style="left:1750px;top:218px">ESI</div>
<div class="m m14 w" style="left:1798px;top:218px">00403236</div>
<div class="m m14 p" style="left:1902px;top:218px">"9unk"</div>
<div class="m m14 rn" style="left:1750px;top:232px">EDI</div>
<div class="m m14 w" style="left:1798px;top:232px">00403258</div>
<div class="m m14 p" style="left:1902px;top:232px">splish.00403258</div>
<div style="left:1750px;top:145px;width:24px;height:2px;background:#f0f078;"></div>
<div style="left:1750px;top:159px;width:24px;height:2px;background:#a8e850;"></div>
<div style="left:1750px;top:229px;width:24px;height:2px;background:#a8e850;"></div>
<div class="m m14 rn" style="left:1750px;top:260px">EIP</div>
<div class="m m14 ch" style="left:1798px;top:260px">00401632</div>
<div class="m m14 p" style="left:1902px;top:260px">splish.00401632</div>
<div class="m m14 rn" style="left:1750px;top:288px">EFLAGS</div>
<div class="m m14 w" style="left:1822px;top:288px">00000246</div>
<div class="m m14 rn" style="left:1750px;top:302px">ZF</div>
<div class="m m14 w" style="left:1774px;top:302px">1</div>
<div class="m m14 rn" style="left:1798px;top:302px">PF</div>
<div class="m m14 w" style="left:1822px;top:302px">1</div>
<div class="m m14 rn" style="left:1846px;top:302px">AF</div>
<div class="m m14 w" style="left:1870px;top:302px">0</div>
<div class="m m14 rn" style="left:1750px;top:316px">OF</div>
<div class="m m14 w" style="left:1774px;top:316px">0</div>
<div class="m m14 rn" style="left:1798px;top:316px">SF</div>
<div class="m m14 w" style="left:1822px;top:316px">0</div>
<div class="m m14 rn" style="left:1846px;top:316px">DF</div>
<div class="m m14 w" style="left:1870px;top:316px">0</div>
<div class="m m14 rn" style="left:1750px;top:330px">CF</div>
<div class="m m14 w" style="left:1774px;top:330px">0</div>
<div class="m m14 rn" style="left:1798px;top:330px">TF</div>
<div class="m m14 w" style="left:1822px;top:330px">0</div>
<div class="m m14 rn" style="left:1846px;top:330px">IF</div>
<div class="m m14 w" style="left:1870px;top:330px">1</div>
<div class="m m14 rn" style="left:1750px;top:358px">LastError</div>
<div class="m m14 w" style="left:1838px;top:358px">00000000 (ERROR_SUCCESS)</div>
<div class="m m14 rn" style="left:1750px;top:372px">LastStatus</div>
<div class="m m14 w" style="left:1838px;top:372px">C0000034 (STATUS_OBJECT_NAME_NOT_FOUND)</div>
<div class="m m14 rn" style="left:1750px;top:400px">GS</div>
<div class="m m14 w" style="left:1774px;top:400px">002B</div>
<div class="m m14 rn" style="left:1822px;top:400px">FS</div>
<div class="m m14 w" style="left:1846px;top:400px">0053</div>
<div class="m m14 rn" style="left:1750px;top:414px">ES</div>
<div class="m m14 w" style="left:1774px;top:414px">002B</div>
<div class="m m14 rn" style="left:1822px;top:414px">DS</div>
<div class="m m14 w" style="left:1846px;top:414px">002B</div>
<div class="m m14 rn" style="left:1750px;top:428px">CS</div>
<div class="m m14 w" style="left:1774px;top:428px">0023</div>
<div class="m m14 rn" style="left:1822px;top:428px">SS</div>
<div class="m m14 w" style="left:1846px;top:428px">002B</div>
<div style="left:1822px;top:425px;width:16px;height:2px;background:#a8e850;"></div>
<div class="m m14 rn" style="left:1750px;top:456px">ST(0)</div>
<div class="m m14 w" style="left:1798px;top:456px">00000000000000000000</div>
<div class="m m14 p" style="left:1966px;top:456px">x87r0</div>
<div class="m m14 p" style="left:2035px;top:456px">0.000000000000000000</div>
<div class="m m14 p" style="left:2014px;top:456px;font-size:12.7px">空</div>
<div class="m m14 rn" style="left:1750px;top:470px">ST(1)</div>
<div class="m m14 w" style="left:1798px;top:470px">00000000000000000000</div>
<div class="m m14 p" style="left:1966px;top:470px">x87r1</div>
<div class="m m14 p" style="left:2035px;top:470px">0.000000000000000000</div>
<div class="m m14 p" style="left:2014px;top:470px;font-size:12.7px">空</div>
<div class="m m14 rn" style="left:1750px;top:484px">ST(2)</div>
<div class="m m14 w" style="left:1798px;top:484px">00000000000000000000</div>
<div class="m m14 p" style="left:1966px;top:484px">x87r2</div>
<div class="m m14 p" style="left:2035px;top:484px">0.000000000000000000</div>
<div class="m m14 p" style="left:2014px;top:484px;font-size:12.7px">空</div>
<div class="m m14 rn" style="left:1750px;top:498px">ST(3)</div>
<div class="m m14 w" style="left:1798px;top:498px">00000000000000000000</div>
<div class="m m14 p" style="left:1966px;top:498px">x87r3</div>
<div class="m m14 p" style="left:2035px;top:498px">0.000000000000000000</div>
<div class="m m14 p" style="left:2014px;top:498px;font-size:12.7px">空</div>
<div class="m m14 rn" style="left:1750px;top:512px">ST(4)</div>
<div class="m m14 w" style="left:1798px;top:512px">3FFF8000000000000000</div>
<div class="m m14 p" style="left:1966px;top:512px">x87r4</div>
<div class="m m14 p" style="left:2035px;top:512px">1.000000000000000000</div>
<div class="m m14 p" style="left:2014px;top:512px;font-size:12.7px">空</div>
<div class="m m14 rn" style="left:1750px;top:526px">ST(5)</div>
<div class="m m14 w" style="left:1798px;top:526px">3FFE8000000000000000</div>
<div class="m m14 p" style="left:1966px;top:526px">x87r5</div>
<div class="m m14 p" style="left:2035px;top:526px">0.5000000000000000000</div>
<div class="m m14 p" style="left:2014px;top:526px;font-size:12.7px">空</div>
<div class="m m14 rn" style="left:1750px;top:540px">ST(6)</div>
<div class="m m14 w" style="left:1798px;top:540px">3FFF8000000000000000</div>
<div class="m m14 p" style="left:1966px;top:540px">x87r6</div>
<div class="m m14 p" style="left:2035px;top:540px">1.000000000000000000</div>
<div class="m m14 p" style="left:2014px;top:540px;font-size:12.7px">空</div>
<div class="m m14 rn" style="left:1750px;top:554px">ST(7)</div>
<div class="m m14 w" style="left:1798px;top:554px">00000000000000000000</div>
<div class="m m14 p" style="left:1966px;top:554px">x87r7</div>
<div class="m m14 p" style="left:2035px;top:554px">0.000000000000000000</div>
<div class="m m14 p" style="left:2014px;top:554px;font-size:12.7px">空</div>
<svg style="left:2546px;top:132px" width="9" height="8"><path d="M4.5 0.5 L8.5 7.5 H0.5z" fill="#a8a8a8"/></svg>
<div class="trk" style="left:2545px;top:144px;width:10px;height:415px"></div>
<div class="thm" style="left:2545px;top:144px;width:10px;height:160px"></div>
<svg style="left:2546px;top:563px" width="9" height="8"><path d="M4.5 7.5 L8.5 0.5 H0.5z" fill="#a8a8a8"/></svg>
<svg style="left:1745px;top:579px" width="8" height="10"><path d="M0.5 5 L7.5 0.5 V9.5z" fill="#a8a8a8"/></svg>
<div class="trk" style="left:1757px;top:579px;width:768px;height:10px"></div>
<div class="thm" style="left:1757px;top:579px;width:614px;height:10px"></div>
<svg style="left:2529px;top:579px" width="8" height="10"><path d="M7.5 5 L0.5 0.5 V9.5z" fill="#a8a8a8"/></svg>
<div style="left:1741px;top:593px;width:819px;height:1px;background:#585858;"></div>
<div class="s" style="left:1746px;top:601px;"><span style="position:relative;top:1.5px">默认</span><span style="display:inline-block;width:6px;height:14px;vertical-align:top"></span><span style="display:inline-block;width:54px;height:14px;vertical-align:top"><span style="display:inline-block;transform:scaleX(1.373);transform-origin:0 50%">(stdcall)</span></span></div>
<svg style="left:2374px;top:605px" width="8" height="5"><path d="M0 0 H8 L4 5z" fill="#a0a0a0"/></svg>
<div style="left:2389px;top:596px;width:101px;height:25px;background:#2d2d2d;"></div>
<svg style="left:2394px;top:605px" width="8" height="5"><path d="M0 0 H8 L4 5z" fill="#a0a0a0"/></svg>
<div class="s" style="left:2410px;top:601px;"><span style="display:inline-block;width:6px;height:14px;vertical-align:top"><span style="display:inline-block;transform:scaleX(1.000);transform-origin:0 50%">5</span></span></div>
<svg style="left:2478px;top:605px" width="8" height="5"><path d="M0 5 H8 L4 0z" fill="#a0a0a0"/></svg>
<div style="left:2494px;top:599px;width:16px;height:16px;border:1px solid #8c8c8c;border-radius:3px;background:#212121"></div>
<div class="s" style="left:2516px;top:600px;"><span style="position:relative;top:1.5px">解锁</span></div>
<div style="left:1742px;top:623px;width:798px;height:13px;background:#424242;"></div>
<div class="m " style="left:1746px;top:624px;">1: [esp+4] 00401407 splish.00401407</div>
<div class="m " style="left:1746px;top:637px;">2: [esp+8] 001009C4</div>
<div class="m " style="left:1746px;top:650px;">3: [esp+C] 00170A3A</div>
<div class="m " style="left:1746px;top:663px;">4: [esp+10] 0019FAE0</div>
<div class="m " style="left:1746px;top:676px;">5: [esp+14] 75C047AB user32.75C047AB</div>
<svg style="left:2545px;top:627px" width="9" height="8"><path d="M4.5 0.5 L8.5 7.5 H0.5z" fill="#a8a8a8"/></svg>
<div class="trk" style="left:2544px;top:640px;width:10px;height:62px"></div>
<div class="thm" style="left:2544px;top:640px;width:10px;height:62px"></div>
<svg style="left:2545px;top:706px" width="9" height="8"><path d="M4.5 7.5 L8.5 0.5 H0.5z" fill="#a8a8a8"/></svg>
<div class="tab sel" style="left:2px;top:720px;width:88px;border-radius:3px 3px 0 0"><svg width="16" height="16" viewBox="0 0 16 16"><rect x="4" y="2" width="11.5" height="9.5" rx="1" fill="#e0e0e0"/><g stroke="#9a9a9a" stroke-width=".9"><path d="M6.5 2 v9.5 M9 2 v9.5 M11.5 2 v9.5 M14 2 v9.5"/></g><rect x="0.5" y="5" width="3.5" height="6.5" fill="#e8b818"/><rect x="1.2" y="6" width="2" height="2.2" fill="#8ab8e8"/><rect x="0.5" y="11.5" width="15" height="1.3" fill="#b0b0b0"/><circle cx="3.5" cy="13.3" r="1.4" fill="#111"/><circle cx="12.5" cy="13.3" r="1.4" fill="#111"/></svg><div class="s"><span style="position:relative;top:1.5px">内存</span><span style="display:inline-block;width:6px;height:14px;vertical-align:top"></span><span style="display:inline-block;width:6px;height:14px;vertical-align:top"><span style="display:inline-block;transform:scaleX(1.000);transform-origin:0 50%">1</span></span></div></div>
<div class="tab" style="left:92px;top:720px;width:88px;border-radius:3px 3px 0 0"><svg width="16" height="16" viewBox="0 0 16 16"><rect x="4" y="2" width="11.5" height="9.5" rx="1" fill="#e0e0e0"/><g stroke="#9a9a9a" stroke-width=".9"><path d="M6.5 2 v9.5 M9 2 v9.5 M11.5 2 v9.5 M14 2 v9.5"/></g><rect x="0.5" y="5" width="3.5" height="6.5" fill="#e8b818"/><rect x="1.2" y="6" width="2" height="2.2" fill="#8ab8e8"/><rect x="0.5" y="11.5" width="15" height="1.3" fill="#b0b0b0"/><circle cx="3.5" cy="13.3" r="1.4" fill="#111"/><circle cx="12.5" cy="13.3" r="1.4" fill="#111"/></svg><div class="s"><span style="position:relative;top:1.5px">内存</span><span style="display:inline-block;width:6px;height:14px;vertical-align:top"></span><span style="display:inline-block;width:6px;height:14px;vertical-align:top"><span style="display:inline-block;transform:scaleX(1.000);transform-origin:0 50%">2</span></span></div></div>
<div class="tab" style="left:182px;top:720px;width:88px;border-radius:3px 3px 0 0"><svg width="16" height="16" viewBox="0 0 16 16"><rect x="4" y="2" width="11.5" height="9.5" rx="1" fill="#e0e0e0"/><g stroke="#9a9a9a" stroke-width=".9"><path d="M6.5 2 v9.5 M9 2 v9.5 M11.5 2 v9.5 M14 2 v9.5"/></g><rect x="0.5" y="5" width="3.5" height="6.5" fill="#e8b818"/><rect x="1.2" y="6" width="2" height="2.2" fill="#8ab8e8"/><rect x="0.5" y="11.5" width="15" height="1.3" fill="#b0b0b0"/><circle cx="3.5" cy="13.3" r="1.4" fill="#111"/><circle cx="12.5" cy="13.3" r="1.4" fill="#111"/></svg><div class="s"><span style="position:relative;top:1.5px">内存</span><span style="display:inline-block;width:6px;height:14px;vertical-align:top"></span><span style="display:inline-block;width:6px;height:14px;vertical-align:top"><span style="display:inline-block;transform:scaleX(1.000);transform-origin:0 50%">3</span></span></div></div>
<div class="tab" style="left:272px;top:720px;width:88px;border-radius:3px 3px 0 0"><svg width="16" height="16" viewBox="0 0 16 16"><rect x="4" y="2" width="11.5" height="9.5" rx="1" fill="#e0e0e0"/><g stroke="#9a9a9a" stroke-width=".9"><path d="M6.5 2 v9.5 M9 2 v9.5 M11.5 2 v9.5 M14 2 v9.5"/></g><rect x="0.5" y="5" width="3.5" height="6.5" fill="#e8b818"/><rect x="1.2" y="6" width="2" height="2.2" fill="#8ab8e8"/><rect x="0.5" y="11.5" width="15" height="1.3" fill="#b0b0b0"/><circle cx="3.5" cy="13.3" r="1.4" fill="#111"/><circle cx="12.5" cy="13.3" r="1.4" fill="#111"/></svg><div class="s"><span style="position:relative;top:1.5px">内存</span><span style="display:inline-block;width:6px;height:14px;vertical-align:top"></span><span style="display:inline-block;width:6px;height:14px;vertical-align:top"><span style="display:inline-block;transform:scaleX(1.000);transform-origin:0 50%">4</span></span></div></div>
<div class="tab" style="left:362px;top:720px;width:88px;border-radius:3px 3px 0 0"><svg width="16" height="16" viewBox="0 0 16 16"><rect x="4" y="2" width="11.5" height="9.5" rx="1" fill="#e0e0e0"/><g stroke="#9a9a9a" stroke-width=".9"><path d="M6.5 2 v9.5 M9 2 v9.5 M11.5 2 v9.5 M14 2 v9.5"/></g><rect x="0.5" y="5" width="3.5" height="6.5" fill="#e8b818"/><rect x="1.2" y="6" width="2" height="2.2" fill="#8ab8e8"/><rect x="0.5" y="11.5" width="15" height="1.3" fill="#b0b0b0"/><circle cx="3.5" cy="13.3" r="1.4" fill="#111"/><circle cx="12.5" cy="13.3" r="1.4" fill="#111"/></svg><div class="s"><span style="position:relative;top:1.5px">内存</span><span style="display:inline-block;width:6px;height:14px;vertical-align:top"></span><span style="display:inline-block;width:6px;height:14px;vertical-align:top"><span style="display:inline-block;transform:scaleX(1.000);transform-origin:0 50%">5</span></span></div></div>
<div class="tab" style="left:452px;top:720px;width:88px;border-radius:3px 3px 0 0"><svg width="16" height="16" viewBox="0 0 16 16"><path d="M2 5 L1.5 0.8 L5.5 3 h5 L14.5 0.8 L14 5 q1.5 3 0 6 q-2 4 -6 4 q-4 0 -6 -4 q-1.5 -3 0 -6z" fill="#e8a850"/><circle cx="5.5" cy="7.5" r="1.2" fill="#333"/><circle cx="10.5" cy="7.5" r="1.2" fill="#333"/><ellipse cx="8" cy="11" rx="2.6" ry="2" fill="#f8e8d0"/><circle cx="8" cy="10.3" r=".8" fill="#333"/></svg><div class="s"><span style="position:relative;top:1.5px">监视</span><span style="display:inline-block;width:6px;height:14px;vertical-align:top"></span><span style="display:inline-block;width:6px;height:14px;vertical-align:top"><span style="display:inline-block;transform:scaleX(1.000);transform-origin:0 50%">1</span></span></div></div>
<div class="tab" style="left:542px;top:720px;width:100px;border-radius:3px 3px 0 0"><svg width="16" height="16" viewBox="0 0 16 16"><text x="8" y="12" font-family="Liberation Serif" font-style="italic" font-size="9" text-anchor="middle" fill="#0e0e0e">[<tspan fill="#a01818">x=</tspan>]</text></svg><div class="s"><span style="position:relative;top:1.5px">局部变量</span></div></div>
<div class="tab" style="left:644px;top:720px;width:88px;border-radius:3px 3px 0 0"><svg width="16" height="16" viewBox="0 0 16 16"><path d="M4 5.5 q0 -4 4.5 -4 q4 0 4 3.5 q0 2 -2.5 4 L5 15" fill="none" stroke="#e84848" stroke-width="1.9"/><path d="M4 5.5 q0 -4 4.5 -4 q4 0 4 3.5 q0 2 -2.5 4 L5 15" fill="none" stroke="#fff" stroke-width="1.9" stroke-dasharray="2.5 2.5"/></svg><div class="s"><span style="position:relative;top:1.5px">结构体</span></div></div>
<div style="left:0px;top:748px;width:1529px;height:1px;background:#2c2c2c;"></div>
<div style="left:0px;top:764px;width:1529px;height:1px;background:#2c2c2c;"></div>
<div style="left:74px;top:749px;width:2px;height:15px;background:#2c2c2c;"></div>
<div style="left:459px;top:749px;width:2px;height:15px;background:#2c2c2c;"></div>
<div style="left:594px;top:749px;width:2px;height:15px;background:#2c2c2c;"></div>
<div class="s" style="left:8px;top:749px;"><span style="position:relative;top:1.5px">地址</span></div>
<div class="s" style="left:80px;top:749px;"><span style="position:relative;top:1.5px">十六进制</span></div>
<div class="m " style="left:463px;top:750px;">ASCII</div>
<div style="left:75px;top:765px;width:24px;height:13px;background:#424242;"></div>
<div style="left:463px;top:765px;width:8px;height:13px;background:#424242;"></div>
<div style="left:74px;top:765px;width:1px;height:221px;background:#727272;"></div>
<div style="left:171px;top:765px;width:1px;height:221px;background:#727272;"></div>
<div style="left:267px;top:765px;width:1px;height:221px;background:#727272;"></div>
<div style="left:363px;top:765px;width:1px;height:221px;background:#727272;"></div>
<div style="left:459px;top:765px;width:1px;height:221px;background:#727272;"></div>
<div style="left:594px;top:765px;width:1px;height:221px;background:#727272;"></div>
<div class="m a" style="left:7px;top:766px;">06040809</div>
<div class="m " style="left:79px;top:766px;color:#e4e4e4">00 00 00 00 00 00 00 00 00 00 00 00 00 00 00 00</div>
<div class="m " style="left:463px;top:766px;color:#e4e4e4">................</div>
<div class="m a" style="left:7px;top:779px;">06040819</div>
<div class="m " style="left:79px;top:779px;color:#e4e4e4">00 00 00 00 00 00 00 00 00 00 00 00 00 00 00 00</div>
<div class="m " style="left:463px;top:779px;color:#e4e4e4">................</div>
<div class="m a" style="left:7px;top:792px;">06040829</div>
<div class="m " style="left:79px;top:792px;color:#e4e4e4">00 00 00 00 00 00 00 00 00 00 00 00 00 00 00 00</div>
<div class="m " style="left:463px;top:792px;color:#e4e4e4">................</div>
<div class="m a" style="left:7px;top:805px;">06040839</div>
<div class="m " style="left:79px;top:805px;color:#e4e4e4">00 00 00 00 00 00 00 00 00 00 00 00 00 00 00 00</div>
<div class="m " style="left:463px;top:805px;color:#e4e4e4">................</div>
<div class="m a" style="left:7px;top:818px;">06040849</div>
<div class="m " style="left:79px;top:818px;color:#e4e4e4">00 00 00 00 00 00 00 00 00 00 00 00 00 00 00 00</div>
<div class="m " style="left:463px;top:818px;color:#e4e4e4">................</div>
<div class="m a" style="left:7px;top:831px;">06040859</div>
<div class="m " style="left:79px;top:831px;color:#e4e4e4">00 00 00 00 00 00 00 00 00 00 00 00 00 00 00 00</div>
<div class="m " style="left:463px;top:831px;color:#e4e4e4">................</div>
<div class="m a" style="left:7px;top:844px;">06040869</div>
<div class="m " style="left:79px;top:844px;color:#e4e4e4">00 00 00 00 00 00 00 00 00 00 00 00 00 00 00 00</div>
<div class="m " style="left:463px;top:844px;color:#e4e4e4">................</div>
<div class="m a" style="left:7px;top:857px;">06040879</div>
<div class="m " style="left:79px;top:857px;color:#e4e4e4">00 00 00 00 00 00 00 00 00 00 00 00 00 00 00 00</div>
<div class="m " style="left:463px;top:857px;color:#e4e4e4">................</div>
<div class="m a" style="left:7px;top:870px;">06040889</div>
<div class="m " style="left:79px;top:870px;color:#e4e4e4">00 00 00 00 00 00 00 00 00 00 00 00 00 00 00 00</div>
<div class="m " style="left:463px;top:870px;color:#e4e4e4">................</div>
<div class="m a" style="left:7px;top:883px;">06040899</div>
<div class="m " style="left:79px;top:883px;color:#e4e4e4">00 00 00 00 00 00 00 00 00 00 00 00 00 00 00 00</div>
<div class="m " style="left:463px;top:883px;color:#e4e4e4">................</div>
<div class="m a" style="left:7px;top:896px;">060408A9</div>
<div class="m " style="left:79px;top:896px;color:#e4e4e4">00 00 00 00 00 00 00 00 00 00 00 00 00 00 00 00</div>
<div class="m " style="left:463px;top:896px;color:#e4e4e4">................</div>
<div class="m a" style="left:7px;top:909px;">060408B9</div>
<div class="m " style="left:79px;top:909px;color:#e4e4e4">00 00 00 00 00 00 00 00 00 00 00 00 00 00 00 00</div>
<div class="m " style="left:463px;top:909px;color:#e4e4e4">................</div>
<div class="m a" style="left:7px;top:922px;">060408C9</div>
<div class="m " style="left:79px;top:922px;color:#e4e4e4">00 00 00 00 00 00 00 00 00 00 00 00 00 00 00 00</div>
<div class="m " style="left:463px;top:922px;color:#e4e4e4">................</div>
<div class="m a" style="left:7px;top:935px;">060408D9</div>
<div class="m " style="left:79px;top:935px;color:#e4e4e4">00 00 00 00 00 00 00 00 00 00 00 00 00 00 00 00</div>
<div class="m " style="left:463px;top:935px;color:#e4e4e4">................</div>
<div class="m a" style="left:7px;top:948px;">060408E9</div>
<div class="m " style="left:79px;top:948px;color:#e4e4e4">00 00 00 00 00 00 00 00 00 00 00 00 00 00 00 00</div>
<div class="m " style="left:463px;top:948px;color:#e4e4e4">................</div>
<div class="m a" style="left:7px;top:961px;">060408F9</div>
<div class="m " style="left:79px;top:961px;color:#e4e4e4">00 00 00 00 00 00 00 00 00 00 00 00 00 00 00 00</div>
<div class="m " style="left:463px;top:961px;color:#e4e4e4">................</div>
<div class="m a" style="left:7px;top:974px;">06040909</div>
<div class="m " style="left:79px;top:974px;color:#e4e4e4">00 00 00 00 00 00 00 00 00 00 00 00 00 00 00 00</div>
<div class="m " style="left:463px;top:974px;color:#e4e4e4">................</div>
<svg style="left:1534px;top:753px" width="9" height="7"><path d="M4.5 0.5 L8.5 6.5 H0.5z" fill="#a8a8a8"/></svg>
<div class="trk" style="left:1533px;top:764px;width:10px;height:205px"></div>
<div class="thm" style="left:1533px;top:764px;width:10px;height:24px;background:#6a6a6a"></div>
<svg style="left:1534px;top:973px" width="9" height="7"><path d="M4.5 6.5 L8.5 0.5 H0.5z" fill="#a8a8a8"/></svg>
<div style="left:1528px;top:750px;width:1px;height:235px;background:#505050;"></div>
<div style="left:1549px;top:718px;width:1px;height:270px;background:#585858;"></div>
<div style="left:1551px;top:720px;width:990px;height:13px;background:#424242;"></div>
<div style="left:1622px;top:720px;width:1px;height:248px;background:#727272;"></div>
<div style="left:1696px;top:720px;width:1px;height:248px;background:#727272;"></div>
<div class="m " style="left:1555px;top:720px;color:#a8ec5a">0019FAA4</div>
<div class="m w" style="left:1627px;top:720px;">0019FAB4</div>
<div class="m a" style="left:1555px;top:733px;">0019FAA8</div>
<div class="m w" style="left:1630px;top:733px;">00401407</div>
<div class="m p" style="left:1702px;top:733px;"><span style="font-size:12.7px">返回到</span> splish.00401407 <span style="font-size:12.7px">自</span> splish.sub_4015E4</div>
<div class="m a" style="left:1555px;top:746px;">0019FAAC</div>
<div class="m w" style="left:1630px;top:746px;">001009C4</div>
<div class="m a" style="left:1555px;top:759px;">0019FAB0</div>
<div class="m w" style="left:1630px;top:759px;">00170A3A</div>
<div class="m a" style="left:1555px;top:772px;">0019FAB4</div>
<div class="m w" style="left:1630px;top:772px;">0019FAE0</div>
<div class="m a" style="left:1555px;top:785px;">0019FAB8</div>
<div class="m w" style="left:1630px;top:785px;">75C047AB</div>
<div class="m p" style="left:1702px;top:785px;"><span style="font-size:12.7px">返回到</span> user32.75C047AB <span style="font-size:12.7px">自</span> ???</div>
<div class="m a" style="left:1555px;top:798px;">0019FABC</div>
<div class="m w" style="left:1630px;top:798px;">003F07F4</div>
<div class="m a" style="left:1555px;top:811px;">0019FAC0</div>
<div class="m w" style="left:1630px;top:811px;">00000111</div>
<div class="m a" style="left:1555px;top:824px;">0019FAC4</div>
<div class="m w" style="left:1630px;top:824px;">00000002</div>
<div class="m a" style="left:1555px;top:837px;">0019FAC8</div>
<div class="m w" style="left:1630px;top:837px;">00070A0A</div>
<div class="m a" style="left:1555px;top:850px;">0019FACC</div>
<div class="m w" style="left:1630px;top:850px;">00000000</div>
<div class="m a" style="left:1555px;top:863px;">0019FAD0</div>
<div class="m w" style="left:1630px;top:863px;">DCBAABCD</div>
<div class="m a" style="left:1555px;top:876px;">0019FAD4</div>
<div class="m w" style="left:1630px;top:876px;">00401178</div>
<div class="m w" style="left:1702px;top:876px;">splish.00401178</div>
<div class="m a" style="left:1555px;top:889px;">0019FAD8</div>
<div class="m w" style="left:1630px;top:889px;">00000111</div>
<div class="m a" style="left:1555px;top:902px;">0019FADC</div>
<div class="m w" style="left:1630px;top:902px;">00000000</div>
<div class="m a" style="left:1555px;top:915px;">0019FAE0</div>
<div class="m w" style="left:1630px;top:915px;">0019FBC4</div>
<div class="m a" style="left:1555px;top:928px;">0019FAE4</div>
<div class="m w" style="left:1630px;top:928px;">75BE52AC</div>
<div class="m p" style="left:1702px;top:928px;"><span style="font-size:12.7px">返回到</span> user32.75BE52AC <span style="font-size:12.7px">自</span> user32.75C04780</div>
<div class="m a" style="left:1555px;top:941px;">0019FAE8</div>
<div class="m w" style="left:1630px;top:941px;">00401178</div>
<div class="m w" style="left:1702px;top:941px;">splish.00401178</div>
<div class="m a" style="left:1555px;top:954px;">0019FAEC</div>
<div class="m w" style="left:1630px;top:954px;">003F07F4</div>
<div style="left:1624px;top:737px;width:2px;height:46px;background:#f08878;"></div>
<div style="left:1624px;top:737px;width:5px;height:2px;background:#f08878;"></div>
<div style="left:1624px;top:781px;width:5px;height:2px;background:#f08878;"></div>
<div style="left:1624px;top:789px;width:2px;height:137px;background:#f08878;"></div>
<div style="left:1624px;top:789px;width:5px;height:2px;background:#f08878;"></div>
<div style="left:1624px;top:924px;width:5px;height:2px;background:#f08878;"></div>
<div style="left:1624px;top:932px;width:2px;height:35px;background:#f08878;"></div>
<div style="left:1624px;top:932px;width:5px;height:2px;background:#f08878;"></div>
<svg style="left:2545px;top:724px" width="9" height="8"><path d="M4.5 0.5 L8.5 7.5 H0.5z" fill="#a8a8a8"/></svg>
<div class="trk" style="left:2544px;top:736px;width:10px;height:216px"></div>
<div class="thm" style="left:2544px;top:922px;width:10px;height:29px"></div>
<svg style="left:2545px;top:956px" width="9" height="8"><path d="M4.5 7.5 L8.5 0.5 H0.5z" fill="#a8a8a8"/></svg>
<svg style="left:1555px;top:972px" width="8" height="10"><path d="M0.5 5 L7.5 0.5 V9.5z" fill="#a8a8a8"/></svg>
<div class="trk" style="left:1567px;top:972px;width:957px;height:10px"></div>
<div class="thm" style="left:1567px;top:972px;width:344px;height:10px"></div>
<svg style="left:2529px;top:972px" width="8" height="10"><path d="M7.5 5 L0.5 0.5 V9.5z" fill="#a8a8a8"/></svg>
<div class="s" style="left:0px;top:996px;"><span style="position:relative;top:1.5px">命令</span><span style="display:inline-block;width:6px;height:14px;vertical-align:top"><span style="display:inline-block;transform:scaleX(1.799);transform-origin:0 50%">:</span></span></div>
<div style="left:38px;top:993px;width:2417px;height:20px;background:#343434;"></div>
<div class="s" style="left:2460px;top:996px;"><span style="position:relative;top:1.5px">默认</span></div>
<svg style="left:2546px;top:1001px" width="8" height="5"><path d="M0 0 H8 L4 5z" fill="#a0a0a0"/></svg>
<div class="s" style="left:13px;top:1021px;color:#a6ae42;"><span style="position:relative;top:1.5px">已暂停</span></div>
<div class="s" style="left:66px;top:1023px;"><span style="display:inline-block;width:66px;height:14px;vertical-align:top"><span style="display:inline-block;transform:scaleX(1.294);transform-origin:0 50%">splish.exe:</span></span><span style="display:inline-block;width:6px;height:14px;vertical-align:top"></span><span style="display:inline-block;width:48px;height:14px;vertical-align:top"><span style="display:inline-block;transform:scaleX(1.000);transform-origin:0 50%">00401621</span></span><span style="display:inline-block;width:6px;height:14px;vertical-align:top"></span><span style="display:inline-block;width:12px;height:14px;vertical-align:top"><span style="display:inline-block;transform:scaleX(1.115);transform-origin:0 50%">-&gt;</span></span><span style="display:inline-block;width:6px;height:14px;vertical-align:top"></span><span style="display:inline-block;width:48px;height:14px;vertical-align:top"><span style="display:inline-block;transform:scaleX(0.960);transform-origin:0 50%">0040162C</span></span><span style="display:inline-block;width:6px;height:14px;vertical-align:top"></span><span style="display:inline-block;width:66px;height:14px;vertical-align:top"><span style="display:inline-block;transform:scaleX(1.000);transform-origin:0 50%">(0x0000000C</span></span><span style="display:inline-block;width:6px;height:14px;vertical-align:top"></span><span style="display:inline-block;width:36px;height:14px;vertical-align:top"><span style="display:inline-block;transform:scaleX(1.227);transform-origin:0 50%">bytes)</span></span></div>
<div class="s" style="left:2421px;top:1023px;"><span style="position:relative;top:1.5px">已调试时间</span><span style="display:inline-block;width:6px;height:14px;vertical-align:top"><span style="display:inline-block;transform:scaleX(1.799);transform-origin:0 50%">:</span></span><span style="display:inline-block;width:12px;height:14px;vertical-align:top"></span><span style="display:inline-block;width:60px;height:14px;vertical-align:top"><span style="display:inline-block;transform:scaleX(1.154);transform-origin:0 50%">2:04:20:45</span></span></div>
</body></html>
